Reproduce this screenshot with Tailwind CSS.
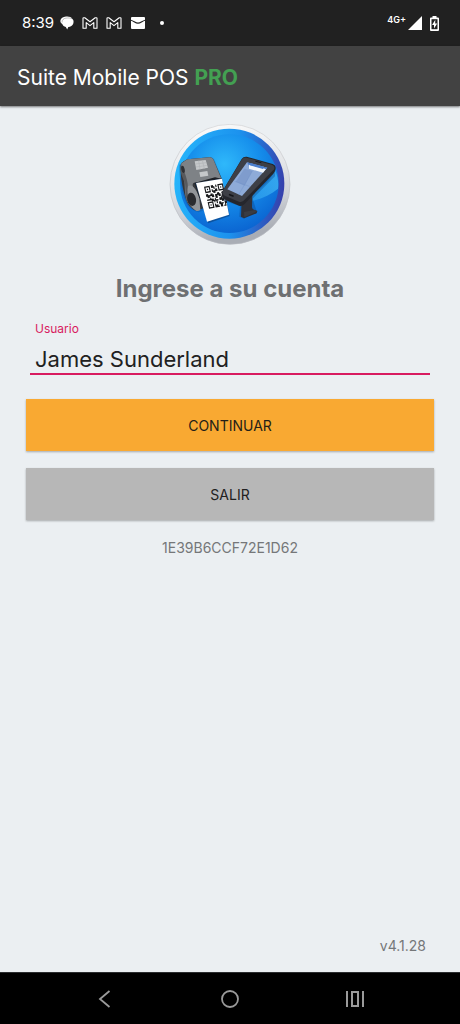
<!DOCTYPE html>
<html lang="es">
<head>
  <meta charset="UTF-8">
  <meta name="viewport" content="width=device-width, initial-scale=1.0">
  <title>Suite Mobile POS PRO</title>
  <script src="https://cdn.jsdelivr.net/npm/@tailwindcss/browser@4"></script>
</head>
<body class="min-h-screen flex flex-col bg-[#ebeff2] font-['Inter',sans-serif] text-[#212121]">

  <!-- Status bar -->
  <div class="h-[46px] shrink-0 bg-[#212121] text-white flex items-center justify-between pl-[22px] pr-[21px]">
    <div class="flex items-center">
      <span class="text-[15px] leading-5 w-[38px]">8:39</span>
      <svg class="w-[14px] h-[14px]" viewBox="0 0 14 14" fill="#fff">
        <path d="M6 .5C9 .2 11.300 1 12.200 2.800 13.600 4 13.900 5.600 13.300 7.400 12.500 9.500 10.500 10.900 8.300 11L7.200 13.500 5.800 10.900C4 10.500 2.800 9.600 2.300 8 .8 7.300.2 6 .4 4.600.7 2.300 3 .7 6 .5z"/>
        <path d="M2 6.500C1.900 4 3.500 2.400 6 2.100 8.500 1.800 10.800 2 12.200 2.800" fill="none" stroke="#212121" stroke-width=".3"/>
      </svg>
      <svg class="w-4 h-3 ml-2" viewBox="0 0 16 12" fill="none" stroke="#fff" stroke-width="1.100" stroke-linejoin="round">
        <path d="M1 1.200Q1 .7 1.600.7H2.800L8 4.700 13.200.7h1.200q.6 0 .6.5V11.300h-3.200V5.600L8 8.600 4.200 5.600v5.700H1z"/>
      </svg>
      <svg class="w-4 h-3 ml-2" viewBox="0 0 16 12" fill="none" stroke="#fff" stroke-width="1.100" stroke-linejoin="round">
        <path d="M1 1.200Q1 .7 1.600.7H2.800L8 4.700 13.200.7h1.200q.6 0 .6.5V11.300h-3.200V5.600L8 8.600 4.200 5.600v5.700H1z"/>
      </svg>
      <svg class="w-[14px] h-3 ml-[9px]" viewBox="0 0 14 12">
        <rect width="14" height="12" rx="1" fill="#fff"/>
        <path d="M0 3.200C3 4.200 4.500 6.200 7 6.200s4-2 7-3" fill="none" stroke="#212121" stroke-width="1.200"/>
      </svg>
      <span class="size-1 rounded-full bg-white ml-[15px]"></span>
    </div>
    <div class="flex items-center">
      <span class="text-[9px] leading-3 font-semibold mb-[6px]">4G+</span>
      <svg class="w-[14px] h-[14px] ml-[2px]" viewBox="0 0 14 14"><path d="M14 0v14H0z" fill="#fff"/></svg>
      <svg class="w-[9px] h-[15px] ml-2" viewBox="0 0 9 15">
        <path d="M2.500 0h4v1.500H8q1 0 1 1V14q0 1-1 1H1q-1 0-1-1V2.500q0-1 1-1h1.500z" fill="#fff"/>
        <rect x="1.500" y="3.200" width="6" height="10" fill="#212121"/>
        <path d="M5.300 3.800L2 9h2v3.600L7.200 7.400h-2z" fill="#fff"/>
      </svg>
    </div>
  </div>

  <!-- App bar -->
  <header class="h-[60px] shrink-0 bg-[#424242] text-white flex items-center px-[17px] pt-1 shadow-[0_1px_2px_rgba(0,0,0,0.5)]">
    <h1 class="text-[21px] leading-7">Suite Mobile POS <span class="font-bold text-[#43a052]">PRO</span></h1>
  </header>

  <main class="flex-1 flex flex-col items-center px-[26px] pt-[18px]">

    <!-- Logo: label printer and handheld terminal -->
    <svg class="w-[122px] h-[122px]" viewBox="27 28 366 366" role="img" aria-label="Suite Mobile POS">
      <defs>
        <linearGradient id="rim" x1="0" y1="0" x2="0.2" y2="1">
          <stop offset="0" stop-color="#fdfdfd"/>
          <stop offset=".5" stop-color="#e3e5e8"/>
          <stop offset=".75" stop-color="#ced1d7"/>
          <stop offset="1" stop-color="#a9adb5"/>
        </linearGradient>
        <linearGradient id="edge" x1="0" y1="0" x2="0" y2="1">
          <stop offset="0" stop-color="#cfd0d2"/>
          <stop offset="1" stop-color="#b4b7be"/>
        </linearGradient>
        <linearGradient id="ring" x1="0" y1=".4" x2="1" y2=".5">
          <stop offset="0" stop-color="#26b5fb"/>
          <stop offset=".55" stop-color="#1c92ee"/>
          <stop offset="1" stop-color="#3640ac"/>
        </linearGradient>
        <radialGradient id="disc" cx=".45" cy=".3" r=".7">
          <stop offset="0" stop-color="#2fb8fa"/>
          <stop offset=".5" stop-color="#168fec"/>
          <stop offset="1" stop-color="#0b66d2"/>
        </radialGradient>
        <linearGradient id="shine" x1="0" y1="0" x2="1" y2="0">
          <stop offset="0" stop-color="#4cc4fa" stop-opacity="0"/>
          <stop offset="1" stop-color="#4cc4fa" stop-opacity=".6"/>
        </linearGradient>
      </defs>
      <circle cx="210" cy="209" r="180" fill="url(#rim)" stroke="url(#edge)" stroke-width="2"/>
      <circle cx="208" cy="207" r="165" fill="url(#ring)"/>
      <circle cx="208" cy="207" r="148" fill="url(#disc)"/>
      <path d="M190 262C260 255 320 222 345 166C354 185 356 205 354 222C315 255 250 272 190 262z" fill="url(#shine)"/>

      <!-- Printer -->
      <path d="M58 150L84 134 151 127Q161 128 165 140L186 194 190 265 150 280 116 293Q95 288 83 272C68 250 56 190 58 150z" fill="#0b4d93" opacity=".35"/>
      <path d="M62 152Q62 144 71 140L82 134 149 128Q158 128 162 139L187 196 180 262 110 288Q92 283 82 264C70 235 60 190 62 152z" fill="#35373b"/>
      <path d="M64 146L82 134 149 128Q158 128 162 139L184 192 102 204Q96 205 99 216L116 268 110 288Q90 278 81 259C72 235 76 216 72 190Q60 170 64 146z" fill="#7e8286"/>
      <path d="M62 150C58 170 68 190 75 205C77 220 74 245 84 265L98 282C84 255 84 227 83 207C80 183 68 160 62 150z" fill="#57595d"/>
      <path d="M84 214C98 206 110 225 118 250L121 286Q114 291 108 288C90 278 78 238 84 214z" fill="#929599"/>
      <ellipse cx="95" cy="254" rx="13" ry="20" transform="rotate(-12 95 254)" fill="#2a2b2f"/>
      <ellipse cx="69" cy="164" rx="5" ry="11" transform="rotate(-12 69 164)" fill="#2f3034"/>
      <path d="M103 205L165 188 184 192 110 209 126 254 118 250z" fill="#202226"/>
      <path d="M104 140L137 136 144 159 109 166z" fill="#c5c8ca"/>
      <path d="M106 148L139 144M108 157L141 152M116 138L120 164M127 137L133 162" stroke="#b0b4b7" stroke-width="2"/>
      <path d="M118 173L142 169 145 183 121 187z" fill="#c5c8ca"/>
      <path d="M105 205L185 191 209 304 144 326z" fill="#0a3468" opacity=".5"/>
      <path d="M108 205L186 192 207 300 141 321z" fill="#fff"/>
      <!-- QR code, 17 x 17 modules -->
      <g transform="matrix(3.300 -0.600 0.900 3.900 132 216)" fill="#17181a">
        <path fill-rule="evenodd" d="M0 0h5v5h-5zM1 1v3h3v-3zM2 2h1v1h-1zM12 0h5v5h-5zM13 1v3h3v-3zM14 2h1v1h-1zM0 12h5v5h-5zM1 13v3h3v-3zM2 14h1v1h-1z"/>
        <path d="M6 0h2v1h1v2h-1v-1h-2zM10 0h1v2h-1zM6 3h1v1h2v-1h2v2h-2v1h-2v-1h-1zM0 6h2v1h2v-1h2v1h1v2h-2v-1h-2v1h-2v-1h-1zM8 7h2v-1h2v1h1v2h-2v-1h-1v2h-2zM14 6h3v2h-1v1h-2v-1h1v-1h-1zM0 10h3v-1h1v1h2v1h1v2h-1v-1h-2v-1h-4zM7 10h1v1h2v1h-1v2h-1v-2h-1zM11 10h2v-1h1v2h2v-1h1v2h-2v1h-2v-1h-2zM6 14h1v1h2v1h1v1h-4zM10 13h2v1h2v1h-1v2h-2v-2h-1zM15 13h2v2h-1v2h-2v-1h1z"/>
      </g>

      <!-- Terminal on its stand -->
      <path d="M188 248L250 130 265 130 346 158 345 185 278 252 290 290 252 312 238 306 240 274 195 260z" fill="#0a3c7d" opacity=".35"/>
      <path d="M245 253L277 240 276 278Q276 285 284 286L292 289 290 296 252 311 243 306z" fill="#303138"/>
      <path d="M252 292L284 286 292 290 253 308z" fill="#3a3c43"/>
      <path d="M185 237Q185 231 190 225L245 133Q250 125 260 126L338 148Q350 153 346 166Q345 171 340 177L253 269Q246 276 237 273L195 255Q185 250 185 237z" fill="#25262c"/>
      <path d="M188 230L245 135Q251 127 260 129L337 151Q346 156 342 164L252 257Q245 264 237 261L194 243Q186 239 188 230z" fill="#3d3f46"/>
      <path d="M261 143L322 159 246 244 202 224z" fill="#8eabd8"/>
      <path d="M253 162L277 168 254 213 227 201z" fill="#7f9ccd"/>
      <path d="M261 143L322 159 316 166 267 153z" fill="#4778c7"/>
      <path d="M267 150L318 163 309 174 267 162z" fill="#f3f7fc"/>
      <path d="M271 145L312 156 309 163 269 152z" fill="#4b7fce"/>
      <path d="M224 200L271 216M278 168L236 240" stroke="#6d8fc8" stroke-width="2" opacity=".5"/>
      <path d="M209 240L219 244" stroke="#15161a" stroke-width="5" stroke-linecap="round"/>
      <path d="M287 140L303 144" stroke="#191a1f" stroke-width="3" stroke-linecap="round"/>
    </svg>

    <h2 class="mt-[27px] text-2xl leading-8 font-bold text-[#6e7072]">Ingrese a su cuenta</h2>

    <form class="w-full flex flex-col mt-4">
      <div class="px-1 flex flex-col">
        <label for="usuario" class="pl-[5px] text-xs leading-4 text-[#d81b60]">Usuario</label>
        <input id="usuario" type="text" value="James Sunderland" class="w-full h-[38px] pt-2 pl-[5px] text-[22px] text-[#212121] bg-transparent border-b-2 border-[#d81b60] outline-none">
      </div>
      <button type="button" class="h-[52px] pt-[2px] mt-6 bg-[#f9a932] text-sm text-[#241f18] shadow-[0_1px_2px_rgba(0,0,0,0.3)]">CONTINUAR</button>
      <button type="button" class="h-[52px] pt-[2px] mt-[17px] bg-[#b7b7b7] text-sm text-[#212121] shadow-[0_1px_2px_rgba(0,0,0,0.3)]">SALIR</button>
    </form>

    <p class="mt-[18px] text-sm leading-5 text-[#757779]">1E39B6CCF72E1D62</p>
    <p class="mt-auto self-end pr-2 mb-4 text-sm leading-5 text-[#757779]">v4.1.28</p>
  </main>

  <!-- System navigation -->
  <nav class="h-[52px] shrink-0 bg-black border-t border-[#2b2d2f] grid grid-cols-3 px-[42px] items-center text-[#9a9a9a]">
    <button type="button" aria-label="Atrás" class="justify-self-center">
      <svg class="size-5" viewBox="0 0 20 20" fill="none" stroke="currentColor" stroke-width="1.800"><path d="M14.500 2L5 10l9.500 8"/></svg>
    </button>
    <button type="button" aria-label="Inicio" class="justify-self-center">
      <svg class="size-5" viewBox="0 0 20 20" fill="none" stroke="currentColor" stroke-width="1.800"><circle cx="10" cy="10" r="8"/></svg>
    </button>
    <button type="button" aria-label="Recientes" class="justify-self-center">
      <svg class="size-5" viewBox="0 0 20 20" fill="none" stroke="currentColor" stroke-width="2"><path d="M2 2v16M18 2v16M7 3h6v14H7z"/></svg>
    </button>
  </nav>

</body>
</html>
